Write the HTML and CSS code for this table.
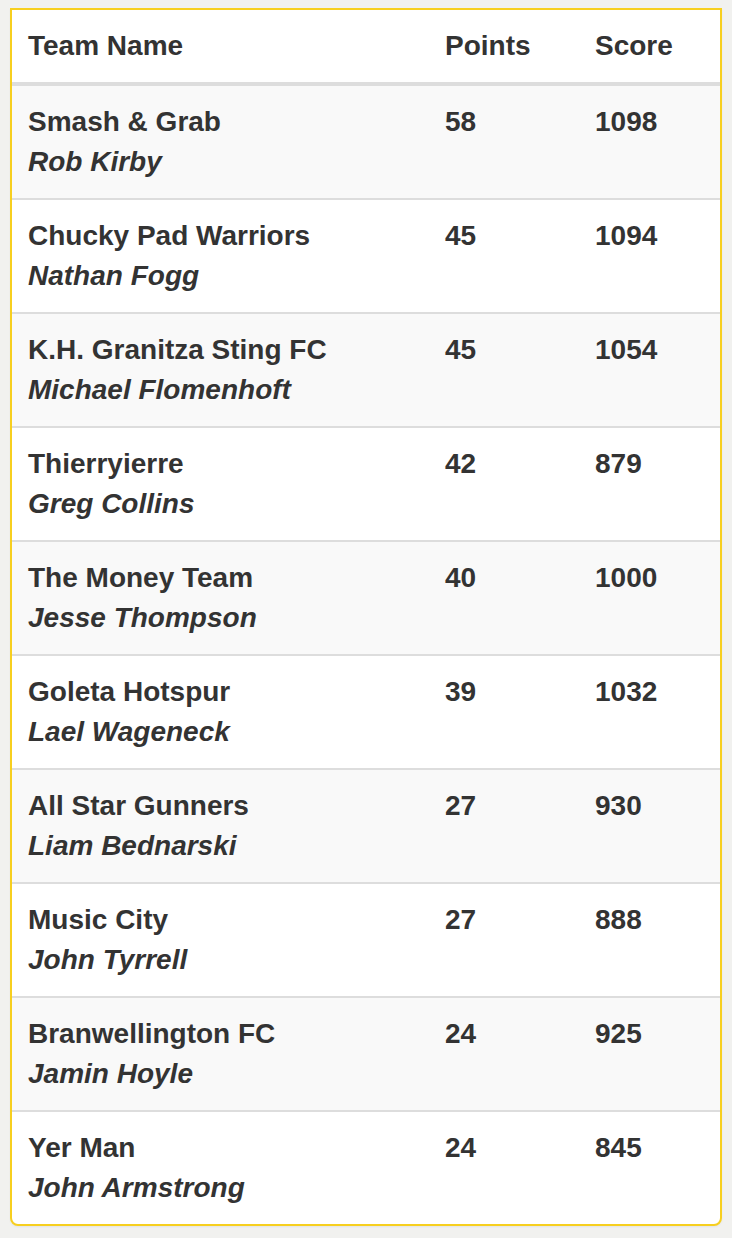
FILE: index.html
```html
<!DOCTYPE html>
<html lang="en">
<head>
<meta charset="utf-8">
<title>League Table</title>
<link rel="stylesheet" href="styles.css">
</head>
<body>
<div class="panel">
  <table class="standings">
    <colgroup>
      <col class="col-team">
      <col class="col-points">
      <col class="col-score">
    </colgroup>
    <thead>
      <tr><th>Team Name</th><th>Points</th><th>Score</th></tr>
    </thead>
    <tbody>
      <tr><td>Smash &amp; Grab<br><em>Rob Kirby</em></td><td>58</td><td>1098</td></tr>
      <tr><td>Chucky Pad Warriors<br><em>Nathan Fogg</em></td><td>45</td><td>1094</td></tr>
      <tr><td>K.H. Granitza Sting FC<br><em>Michael Flomenhoft</em></td><td>45</td><td>1054</td></tr>
      <tr><td>Thierryierre<br><em>Greg Collins</em></td><td>42</td><td>879</td></tr>
      <tr><td>The Money Team<br><em>Jesse Thompson</em></td><td>40</td><td>1000</td></tr>
      <tr><td>Goleta Hotspur<br><em>Lael Wageneck</em></td><td>39</td><td>1032</td></tr>
      <tr><td>All Star Gunners<br><em>Liam Bednarski</em></td><td>27</td><td>930</td></tr>
      <tr><td>Music City<br><em>John Tyrrell</em></td><td>27</td><td>888</td></tr>
      <tr><td>Branwellington FC<br><em>Jamin Hoyle</em></td><td>24</td><td>925</td></tr>
      <tr><td>Yer Man<br><em>John Armstrong</em></td><td>24</td><td>845</td></tr>
    </tbody>
  </table>
</div>
</body>
</html>
```
FILE: styles.css
```css
html, body {
  margin: 0;
  padding: 0;
  background: #f1f1ef;
}
body {
  padding: 8px 10px;
  font-family: "Liberation Sans", Arial, Helvetica, sans-serif;
  color: #333;
}
.panel {
  width: 712px;
  box-sizing: border-box;
  background: #fff;
  border: 2px solid #f7cf1f;
  border-radius: 0 0 8px 8px;
  overflow: hidden;
  box-shadow: 0 1px 2px rgba(0,0,0,0.05);
}
.standings {
  width: 100%;
  border-collapse: collapse;
  table-layout: fixed;
  font-size: 28px;
  line-height: 40px;
  font-weight: bold;
}
.col-team { width: 417px; }
.col-points { width: 150px; }
.col-score { width: 141px; }
.standings th,
.standings td {
  padding: 16px 16px;
  text-align: left;
  vertical-align: top;
}
.standings thead th {
  border-bottom: 4px solid #ddd;
  background: #fff;
}
.standings tbody td {
  border-top: 2px solid #ddd;
}
.standings tbody tr:first-child td {
  border-top: 0;
}
.standings tbody tr:nth-child(odd) {
  background: #f9f9f9;
}
.standings em {
  font-style: italic;
}
```
